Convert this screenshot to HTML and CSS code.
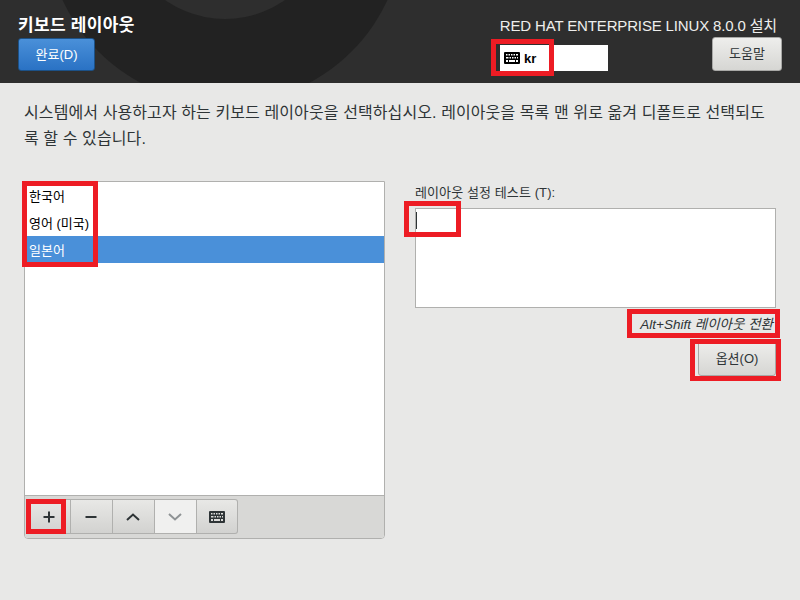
FILE: index.html
```html
<!DOCTYPE html>
<html lang="ko">
<head>
<meta charset="utf-8">
<title>키보드 레이아웃</title>
<link rel="stylesheet" href="styles.css">
</head>
<body>
<svg class="defs" width="0" height="0" aria-hidden="true">
  <symbol id="kbd" viewBox="0 0 16 12">
    <path fill-rule="evenodd" fill="currentColor" d="M1 0h14a1 1 0 0 1 1 1v10a1 1 0 0 1-1 1H1a1 1 0 0 1-1-1V1a1 1 0 0 1 1-1zM2 2v1.500h1.500V2zM4.500 2v1.500H6V2zM7 2v1.500h1.500V2zM9.500 2v1.500H11V2zM12 2v1.500h2V2zM2 5v1.500h2.500V5zM5.500 5v1.500H7V5zM8 5v1.500h1.500V5zM10.500 5v1.500H12V5zM13 5v1.500h1V5zM2 8v2h2V8zM5 8v2h6V8zM12 8v2h2V8z"/>
  </symbol>
</svg>

<header class="topbar">
  <svg class="topbar-art" width="800" height="83" viewBox="0 0 800 83" aria-hidden="true">
    <circle cx="225" cy="-75" r="179" fill="#222222"/>
    <circle cx="225" cy="-85" r="104" fill="#2e2e2e"/>
  </svg>
  <div class="topbar-left">
    <h1 class="title">키보드 레이아웃</h1>
    <button class="btn btn-primary">완료(D)</button>
  </div>
  <div class="topbar-right">
    <div class="product">RED HAT ENTERPRISE LINUX 8.0.0 설치</div>
    <div class="topbar-row">
      <div class="kbd-indicator">
        <svg class="kbd-icon" width="16" height="12" viewBox="0 0 16 12"><use href="#kbd"/></svg>
        <span class="kbd-label">kr</span>
      </div>
      <button class="btn btn-help">도움말</button>
    </div>
  </div>
</header>

<main class="content">
  <p class="intro">시스템에서 사용하고자 하는 키보드 레이아웃을 선택하십시오. 레이아웃을 목록 맨 위로 옮겨 디폴트로 선택되도록 할 수 있습니다.</p>
  <div class="columns">
    <section class="list-panel">
      <ul class="layout-list">
        <li class="layout-item">한국어</li>
        <li class="layout-item">영어 (미국)</li>
        <li class="layout-item is-selected">일본어</li>
      </ul>
      <div class="toolbar">
        <div class="tool-group">
          <button class="tool" aria-label="추가"><svg width="12" height="12" viewBox="0 0 12 12"><path d="M5 .5h2V5h4.500v2H7v4.500H5V7H.5V5H5z" fill="#2e3436"/></svg></button>
          <button class="tool" aria-label="제거"><svg width="12" height="12" viewBox="0 0 12 12"><path d="M.5 5h11v2H.5z" fill="#2e3436"/></svg></button>
          <button class="tool" aria-label="위로"><svg width="14" height="10" viewBox="0 0 14 10"><path d="M1 8 7 2.500 13 8" fill="none" stroke="#2e3436" stroke-width="2"/></svg></button>
          <button class="tool tool-disabled" aria-label="아래로"><svg width="14" height="10" viewBox="0 0 14 10"><path d="M1 2 7 7.500 13 2" fill="none" stroke="#8f9395" stroke-width="2"/></svg></button>
          <button class="tool tool-last" aria-label="미리 보기"><svg class="kbd-tool" width="16" height="12" viewBox="0 0 16 12"><use href="#kbd"/></svg></button>
        </div>
      </div>
    </section>
    <section class="test-panel">
      <label class="test-label">레이아웃 설정 테스트 (T):</label>
      <div class="test-area"><span class="caret"></span></div>
      <div class="switch-hint">Alt+Shift 레이아웃 전환</div>
      <button class="btn btn-options">옵션(O)</button>
    </section>
  </div>
</main>

<div class="mark mark-kbd"></div>
<div class="mark mark-list"></div>
<div class="mark mark-add"></div>
<div class="mark mark-caret"></div>
<div class="mark mark-hint"></div>
<div class="mark mark-options"></div>
</body>
</html>
```
FILE: styles.css
```css
* { box-sizing: border-box; }
html, body { margin: 0; height: 100%; }
body {
  width: 800px;
  height: 600px;
  position: relative;
  overflow: hidden;
  background: #e8e8e7;
  color: #2e3436;
  font-family: "Liberation Sans", "Noto Sans CJK KR", sans-serif;
  font-size: 14px;
}
.defs { position: absolute; }
.topbar {
  position: relative;
  height: 83px;
  background: #2e2e2e;
  display: flex;
  justify-content: space-between;
  padding: 12px 18px 0 18px;
  overflow: hidden;
}
.topbar-art { position: absolute; left: 0; top: 0; }
.topbar-left, .topbar-right { position: relative; }
.title {
  margin: 0;
  height: 26px;
  color: #fff;
  font-size: 17px;
  font-weight: 700;
  line-height: 28px;
  letter-spacing: 0.3px;
}
.topbar-right { width: 300px; display: flex; flex-direction: column; align-items: flex-end; }
.product { color: #eeeeec; font-size: 15px; line-height: 26px; margin-right: 5px; letter-spacing: -0.15px; padding-top: 1px; height: 25px; }
.topbar-row { width: 100%; display: flex; justify-content: space-between; align-items: flex-start; padding-left: 18px; }
.btn {
  font-family: inherit;
  font-size: 13px;
  border-radius: 3px;
  padding: 0 0 3px;
}
.btn-primary {
  display: block;
  width: 77px;
  height: 33px;
  color: #fff;
  background: linear-gradient(#4a90d9, #2a72c4);
  border: 1px solid #1c5187;
}
.kbd-indicator {
  width: 108px;
  height: 26px;
  margin-top: 8px;
  background: #fff;
  color: #000;
  display: flex;
  align-items: center;
  gap: 4px;
  padding-left: 4px;
  font-size: 13px;
  font-weight: 700;
}
.kbd-icon { color: #000; }
.btn-help {
  width: 70px;
  height: 34px;
  color: #2e3436;
  background: linear-gradient(#eeeeec, #d6d6d3);
  border: 1px solid #a8a8a6;
}
.content { padding: 17px 24px 0; }
.intro {
  margin: 0;
  font-size: 16px;
  line-height: 26px;
  letter-spacing: 0.1px;
  color: #2e3436;
  width: 750px;
}
.columns { display: flex; gap: 30px; margin-top: 29px; }
.list-panel {
  width: 361px;
  height: 358px;
  display: flex;
  flex-direction: column;
  border: 1px solid #b0b0ae;
  border-radius: 0 0 4px 4px;
  background: #fff;
  overflow: hidden;
}
.layout-list { list-style: none; margin: 0; padding: 0; flex: 1; }
.layout-item { height: 27px; line-height: 29px; padding-left: 4px; font-size: 13px; color: #000; }
.is-selected { background: #4a90d9; color: #fff; }
.toolbar {
  height: 43px;
  background: #d8d8d6;
  border-top: 1px solid #b0b0ae;
  padding: 3px 0 0 4px;
}
.tool-group { display: flex; height: 35px; }
.tool {
  width: 42px;
  height: 35px;
  padding: 0 1px 0 0;
  display: flex;
  align-items: center;
  justify-content: center;
  background: linear-gradient(#e8e8e6, #d2d2d0);
  border: 1px solid #b0b0ae;
  border-width: 1px 1px 1px 0;
}
.tool-last { width: 41px; padding: 0; border-radius: 0 3px 3px 0; }
.tool-disabled { background: #f0f0ef; }
.kbd-tool { color: #2e3436; }
.test-panel { width: 361px; display: flex; flex-direction: column; align-items: flex-end; }
.test-label { align-self: flex-start; font-size: 13px; line-height: 20px; color: #2e3436; margin-top: 2px; letter-spacing: 0.1px; }
.test-area {
  width: 361px;
  height: 100px;
  margin-top: 5px;
  background: #fff;
  border: 1px solid #b0b0ae;
  padding: 3px 0 0 0;
}
.caret { display: block; width: 1px; height: 17px; background: #2e3436; }
.switch-hint { font-size: 13.5px; font-style: italic; line-height: 16px; margin-top: 9px; margin-right: 3px; }
.btn-options {
  width: 78px;
  height: 35px;
  margin-top: 8px;
  color: #2e3436;
  background: linear-gradient(#eeeeec, #d6d6d3);
  border: 1px solid #a8a8a6;
}
.mark { position: absolute; border: 5px solid #ed1c24; pointer-events: none; }
.mark-kbd { left: 491px; top: 39px; width: 63px; height: 37px; }
.mark-list { left: 22px; top: 181px; width: 76px; height: 86px; }
.mark-add { left: 26px; top: 499px; width: 40px; height: 35px; }
.mark-caret { left: 404px; top: 201px; width: 57px; height: 36px; }
.mark-hint { left: 627px; top: 309px; width: 153px; height: 29px; }
.mark-options { left: 690px; top: 339px; width: 91px; height: 42px; }
```
